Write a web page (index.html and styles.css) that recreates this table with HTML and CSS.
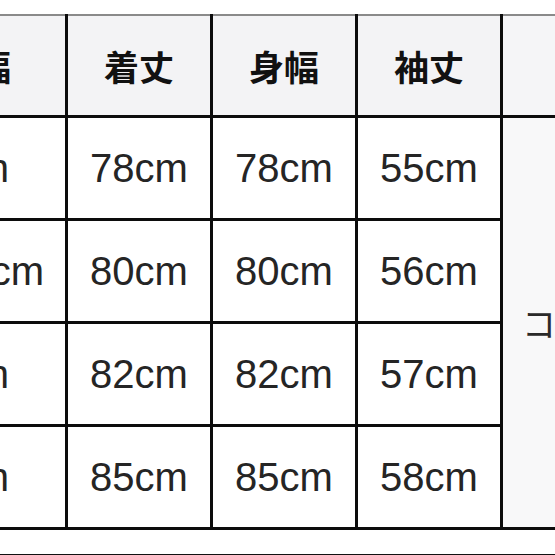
FILE: index.html
```html
<!DOCTYPE html>
<html lang="ja">
<head>
<meta charset="utf-8">
<title>サイズ表</title>
<link rel="stylesheet" href="styles.css">
</head>
<body>
<div class="page">
  <table class="size-table">
    <colgroup>
      <col class="col-first"><col class="col"><col class="col"><col class="col"><col class="col">
    </colgroup>
    <thead>
      <tr class="head-row">
        <th class="first head-first">肩幅</th>
        <th>着丈</th>
        <th>身幅</th>
        <th>袖丈</th>
        <th class="note-head"></th>
      </tr>
    </thead>
    <tbody>
      <tr>
        <td class="first short">52cm</td>
        <td>78cm</td>
        <td>78cm</td>
        <td>55cm</td>
        <td class="note" rowspan="4">コメント</td>
      </tr>
      <tr>
        <td class="first long">54cm</td>
        <td>80cm</td>
        <td>80cm</td>
        <td>56cm</td>
      </tr>
      <tr>
        <td class="first short">56cm</td>
        <td>82cm</td>
        <td>82cm</td>
        <td>57cm</td>
      </tr>
      <tr>
        <td class="first short">58cm</td>
        <td>85cm</td>
        <td>85cm</td>
        <td>58cm</td>
      </tr>
    </tbody>
  </table>
  <div class="next-table"></div>
</div>
</body>
</html>
```
FILE: styles.css
```css
html, body {
  margin: 0;
  padding: 0;
  background: #ffffff;
  overflow: hidden;
}

.page {
  width: 555px;
  height: 555px;
  overflow: hidden;
  padding-top: 14px;
  box-sizing: border-box;
}

.size-table {
  border-collapse: collapse;
  table-layout: fixed;
  width: 825px;
  margin-left: -180px;
  border-top: 2px solid #8a8a8a;
}

.col-first {
  width: 245px;
}

.col {
  width: 145px;
}

.size-table th,
.size-table td {
  border: 3px solid #0c0c0c;
  padding: 0;
  text-align: center;
  vertical-align: middle;
  white-space: nowrap;
  overflow: hidden;
}

.size-table thead th {
  border-top: 2px solid #8a8a8a;
  height: 99px;
  background: #f3f3f5;
  font-family: "Noto Sans CJK JP", "Noto Sans", sans-serif;
  font-weight: 700;
  font-size: 35px;
  color: #111111;
}

.size-table td {
  height: 100px;
  background: #ffffff;
  font-family: "Liberation Sans", Arial, sans-serif;
  font-size: 40px;
  color: #252525;
}

.size-table .first {
  text-align: right;
}

.size-table .head-first {
  padding-right: 54px;
}

.size-table .short {
  padding-right: 56px;
}

.size-table .long {
  padding-right: 21px;
}

.size-table .note-head {
  background: #f5f5f7;
}

.size-table .note {
  background: #f8f8f9;
  text-align: left;
  padding-left: 19px;
  font-family: "Noto Sans CJK JP", "Noto Sans", sans-serif;
  font-weight: 400;
  font-size: 34px;
  color: #2a2a2a;
}

.next-table {
  margin-top: 24px;
  border-top: 3px solid #111111;
  width: 555px;
}
```
